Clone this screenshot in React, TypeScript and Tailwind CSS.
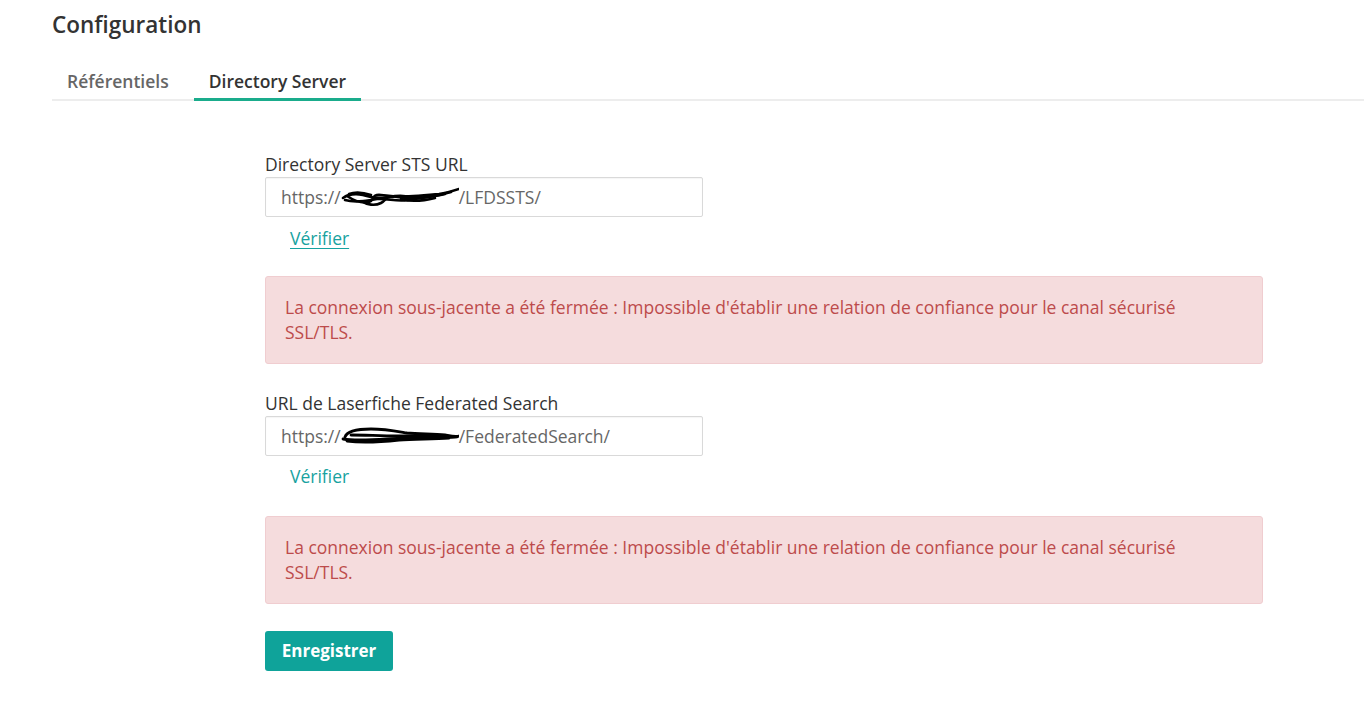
import React from "react";

function Scribble({ w, variant }: { w: number; variant: number }) {
  return (
    <span className="relative inline-block align-middle" style={{ width: w, height: 20 }}>
      <svg className="absolute left-0 top-[-1px]" width={w} height={22} viewBox={`0 0 ${w} 22`} fill="none">
        {variant === 0 ? (
          <g stroke="#000" strokeWidth="2.6" strokeLinecap="round" strokeLinejoin="round">
            <path d="M2 12 C 10 6, 20 8, 30 11 C 40 14, 50 9, 62 10 C 74 11, 86 9, 98 8 C 106 7, 112 5, 118 3" />
            <path d="M4 14 C 14 17, 26 15, 36 13 C 46 12, 56 16, 66 14 C 78 12, 92 11, 104 8" />
            <path d="M6 10 C 12 14, 20 18, 28 16 C 34 14, 30 8, 40 9 C 52 10, 60 12, 72 12 C 84 12, 96 10, 110 6" />
            <path d="M20 15 C 26 19, 34 20, 40 17 C 46 14, 44 10, 52 11" />
            <path d="M60 13 C 70 16, 82 15, 94 12" />
            <path d="M8 8 C 16 5, 24 7, 30 9" />
          </g>
        ) : (
          <g stroke="#000" strokeWidth="2.8" strokeLinecap="round" strokeLinejoin="round">
            <path d="M4 12 C 6 6, 16 4, 30 4 C 44 4, 54 6, 66 8 C 78 9, 92 9, 104 10 C 110 11, 114 12, 118 11" />
            <path d="M2 14 C 14 16, 30 15, 46 14 C 62 13, 80 13, 96 12 C 106 12, 112 13, 116 12" />
            <path d="M6 16 C 20 18, 40 17, 58 15 C 74 14, 92 14, 108 13" />
            <path d="M10 10 C 24 10, 40 11, 56 11 C 70 11, 84 11, 100 11" />
          </g>
        )}
      </svg>
    </span>
  );
}

function ErrorBox({ mt }: { mt: string }) {
  return (
    <div
      className={`${mt} h-[88px] w-[998px] rounded-[3px] border border-[#f0cdd0] bg-[#f5dcdd] px-[19px] pt-[18px] text-[17.5px] leading-[25px] text-[#bd4b4b]`}
    >
      La connexion sous-jacente a été fermée : Impossible d'établir une relation de confiance pour le canal sécurisé
      <br />
      SSL/TLS.
    </div>
  );
}

export default function App() {
  return (
    <div
      className="min-h-[716px] w-[1364px] bg-white text-[#333]"
      style={{ fontFamily: '"Open Sans", "Noto Sans", sans-serif' }}
    >
      <div className="pl-[52px]">
        <h1 className="pt-[10px] text-[22.5px] font-semibold leading-[30px] text-[#333]">Configuration</h1>
        <div className="mt-[29px] flex gap-[10px] border-b-2 border-[#ededed]">
          <div className="px-[15px] pb-[6px] text-[17.5px] font-semibold leading-[24px] text-[#666]">Référentiels</div>
          <div className="-mb-[2px] border-b-[3px] border-[#1aac8c] px-[15px] pb-[5px] text-[17.5px] font-semibold leading-[24px] text-[#333]">
            Directory Server
          </div>
        </div>
      </div>

      <div className="pl-[265px] pt-[52px]">
        <div className="text-[17.5px] leading-[22px] text-[#333]">Directory Server STS URL</div>
        <div className="mt-[2px] flex h-[40px] w-[438px] items-center rounded-[2px] border border-[#d9d9d9] px-[15px] text-[17.5px] text-[#666] shadow-[inset_0_1px_1px_rgba(0,0,0,0.04)]">
          <span>https://</span>
          <Scribble w={118} variant={0} />
          <span>/LFDSSTS/</span>
        </div>
        <div className="mt-[10px] pl-[25px] text-[17.5px] leading-[22px] text-[#17a2a0] underline underline-offset-[3px]">
          Vérifier
        </div>
        <ErrorBox mt="mt-[27px]" />

        <div className="mt-[28px] text-[17.5px] leading-[22px] text-[#333]">URL de Laserfiche Federated Search</div>
        <div className="mt-[2px] flex h-[40px] w-[438px] items-center rounded-[2px] border border-[#d9d9d9] px-[15px] text-[17.5px] text-[#666] shadow-[inset_0_1px_1px_rgba(0,0,0,0.04)]">
          <span>https://</span>
          <Scribble w={118} variant={1} />
          <span>/FederatedSearch/</span>
        </div>
        <div className="mt-[9px] pl-[25px] text-[17.5px] leading-[22px] text-[#17a2a0]">Vérifier</div>
        <ErrorBox mt="mt-[29px]" />

        <button className="mt-[27px] h-[40px] w-[128px] rounded-[3px] bg-[#0fa39a] text-[17px] font-bold text-white">
          Enregistrer
        </button>
      </div>
    </div>
  );
}
